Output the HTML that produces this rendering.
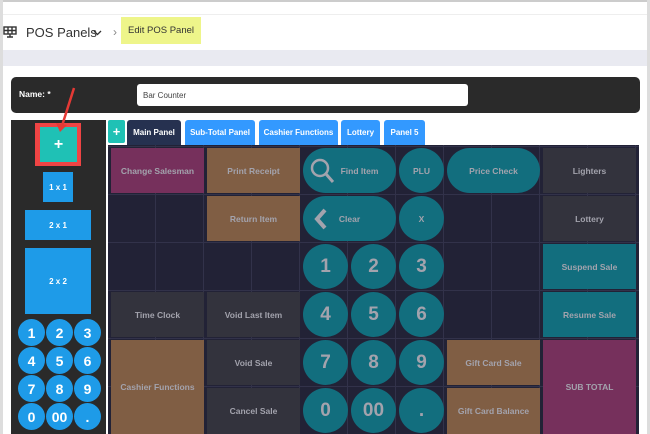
<!DOCTYPE html><html><head><style>
*{margin:0;padding:0;box-sizing:border-box}
body{width:650px;height:434px;overflow:hidden;background:#fff;font-family:"Liberation Sans",sans-serif;position:relative}
.a{position:absolute}
.c{position:absolute;display:flex;align-items:center;justify-content:center;color:#a3a3ad;font-weight:bold;font-size:8.5px;text-align:center}
.p{background:#76305c}.b{background:#805e44}.g{background:#33333d}.t{background:#126e7e}
.k{background:#1e9be8;color:#fff;border-radius:50%;font-size:14px}
.n{border-radius:50%;font-size:19px}
.tab{position:absolute;top:120px;height:25px;background:#3399ff;color:#fff;font-size:8px;font-weight:bold;display:flex;align-items:center;justify-content:center;border-radius:3px 3px 0 0}
</style></head><body>
<div class="a" style="left:0;top:0;width:650px;height:2px;background:#ccc"></div>
<div class="a" style="left:0;top:0;width:3px;height:434px;background:#ddd"></div>
<div class="a" style="left:647px;top:0;width:3px;height:434px;background:#ddd"></div>
<div class="a" style="left:3px;top:14px;width:644px;height:1px;background:#eee"></div>
<svg class="a" style="left:3px;top:26px" width="14" height="12" viewBox="0 0 14 12"><rect x="1" y="1" width="12" height="7" fill="none" stroke="#333" stroke-width="1.4"/><path d="M1 4.5H13M5 1V8M9 1V8M4 11H10M7 8V11" stroke="#333" stroke-width="1.4"/></svg>
<div class="a" style="left:26px;top:25px;font-size:13px;color:#333">POS Panels</div>
<svg class="a" style="left:93px;top:30px" width="9" height="6"><path d="M1 1L4.5 4.5L8 1" fill="none" stroke="#333" stroke-width="1.3"/></svg>
<div class="a" style="left:113px;top:25px;font-size:12px;color:#888">›</div>
<div class="a" style="left:121px;top:17px;width:80px;height:27px;background:#eef58a;font-size:9.5px;color:#333;display:flex;align-items:center;justify-content:center">Edit POS Panel</div>
<div class="a" style="left:3px;top:50px;width:644px;height:16px;background:#e9eaf1"></div>
<div class="a" style="left:11px;top:77px;width:629px;height:36px;background:#2a2a2a;border-radius:5px"></div>
<div class="a" style="left:19px;top:89px;font-size:8.5px;color:#fff;font-weight:bold">Name: *</div>
<div class="a" style="left:137px;top:84px;width:331px;height:22px;background:#fff;border-radius:3px;font-size:8px;color:#444;padding:7px 6px">Bar Counter</div>
<div class="a" style="left:11px;top:120px;width:95px;height:314px;background:#2a2a2a"></div>
<div class="a" style="left:35px;top:123px;width:46px;height:43px;background:#ef4444"></div>
<div class="c" style="left:40px;top:127px;width:37px;height:35px;background:#1fc1b5;color:#fff;font-size:16px">+</div>
<svg class="a" style="left:55px;top:85px" width="30" height="50"><path d="M19 3L6 44" stroke="#e53935" stroke-width="2.5"/><path d="M1 38L5 47L12 40Z" fill="#e53935"/></svg>
<div class="c" style="left:43px;top:172px;width:30px;height:30px;background:#1e9be8;color:#fff;font-size:8px">1 x 1</div>
<div class="c" style="left:25px;top:210px;width:66px;height:30px;background:#1e9be8;color:#fff;font-size:8px">2 x 1</div>
<div class="c" style="left:25px;top:248px;width:66px;height:66px;background:#1e9be8;color:#fff;font-size:8px">2 x 2</div>
<div class="c k" style="left:18px;top:319px;width:27px;height:27px">1</div><div class="c k" style="left:46px;top:319px;width:27px;height:27px">2</div><div class="c k" style="left:74px;top:319px;width:27px;height:27px">3</div>
<div class="c k" style="left:18px;top:347px;width:27px;height:27px">4</div><div class="c k" style="left:46px;top:347px;width:27px;height:27px">5</div><div class="c k" style="left:74px;top:347px;width:27px;height:27px">6</div>
<div class="c k" style="left:18px;top:375px;width:27px;height:27px">7</div><div class="c k" style="left:46px;top:375px;width:27px;height:27px">8</div><div class="c k" style="left:74px;top:375px;width:27px;height:27px">9</div>
<div class="c k" style="left:18px;top:403px;width:27px;height:27px">0</div><div class="c k" style="left:46px;top:403px;width:27px;height:27px">00</div><div class="c k" style="left:74px;top:403px;width:27px;height:27px">.</div>
<div class="c" style="left:108px;top:120px;width:17px;height:23px;background:#1fc1b5;color:#fff;font-size:13px;border-radius:2px">+</div>
<div class="tab" style="left:127px;width:54px;background:#263150">Main Panel</div>
<div class="tab" style="left:185px;width:70px">Sub-Total Panel</div>
<div class="tab" style="left:259px;width:79px">Cashier Functions</div>
<div class="tab" style="left:341px;width:39px">Lottery</div>
<div class="tab" style="left:384px;width:41px">Panel 5</div>
<div class="a" style="left:108px;top:145px;width:531px;height:289px;background:#222236;background-image:repeating-linear-gradient(90deg,transparent 0 47px,#32324a 47px 48px),repeating-linear-gradient(0deg,transparent 0 47px,#32324a 47px 48px)"></div>
<div class="c p" style="left:111px;top:148px;width:93px;height:45px">Change Salesman</div>
<div class="c b" style="left:207px;top:148px;width:93px;height:45px">Print Receipt</div>
<div class="c t" style="left:303px;top:148px;width:93px;height:45px;border-radius:23px;padding-left:20px">Find Item</div>
<svg class="a" style="left:309px;top:157px" width="26" height="28"><circle cx="11" cy="11" r="8" fill="none" stroke="#a3a3ad" stroke-width="2.5"/><path d="M17 17L24 25" stroke="#a3a3ad" stroke-width="3"/></svg>
<div class="c t" style="left:399px;top:148px;width:45px;height:45px;border-radius:50%">PLU</div>
<div class="c t" style="left:447px;top:148px;width:93px;height:45px;border-radius:23px">Price Check</div>
<div class="c g" style="left:543px;top:148px;width:93px;height:45px">Lighters</div>
<div class="c b" style="left:207px;top:196px;width:93px;height:45px">Return Item</div>
<div class="c t" style="left:303px;top:196px;width:93px;height:45px;border-radius:23px">Clear</div>
<svg class="a" style="left:314px;top:207px" width="14" height="24"><path d="M11 3L3 12L11 21" fill="none" stroke="#a3a3ad" stroke-width="4"/></svg>
<div class="c t" style="left:399px;top:196px;width:45px;height:45px;border-radius:50%">X</div>
<div class="c g" style="left:543px;top:196px;width:93px;height:45px">Lottery</div>
<div class="c t" style="left:543px;top:244px;width:93px;height:45px">Suspend Sale</div>
<div class="c t" style="left:543px;top:292px;width:93px;height:45px">Resume Sale</div>
<div class="c g" style="left:111px;top:292px;width:93px;height:45px">Time Clock</div>
<div class="c g" style="left:207px;top:292px;width:93px;height:45px">Void Last Item</div>
<div class="c b" style="left:111px;top:340px;width:93px;height:94px">Cashier Functions</div>
<div class="c g" style="left:207px;top:340px;width:93px;height:45px">Void Sale</div>
<div class="c g" style="left:207px;top:388px;width:93px;height:46px">Cancel Sale</div>
<div class="c b" style="left:447px;top:340px;width:93px;height:45px">Gift Card Sale</div>
<div class="c b" style="left:447px;top:388px;width:93px;height:46px">Gift Card Balance</div>
<div class="c p" style="left:543px;top:340px;width:93px;height:94px">SUB TOTAL</div>
<div class="c t n" style="left:303px;top:244px;width:45px;height:45px">1</div>
<div class="c t n" style="left:351px;top:244px;width:45px;height:45px">2</div>
<div class="c t n" style="left:399px;top:244px;width:45px;height:45px">3</div>
<div class="c t n" style="left:303px;top:292px;width:45px;height:45px">4</div>
<div class="c t n" style="left:351px;top:292px;width:45px;height:45px">5</div>
<div class="c t n" style="left:399px;top:292px;width:45px;height:45px">6</div>
<div class="c t n" style="left:303px;top:340px;width:45px;height:45px">7</div>
<div class="c t n" style="left:351px;top:340px;width:45px;height:45px">8</div>
<div class="c t n" style="left:399px;top:340px;width:45px;height:45px">9</div>
<div class="c t n" style="left:303px;top:388px;width:45px;height:45px">0</div>
<div class="c t n" style="left:351px;top:388px;width:45px;height:45px">00</div>
<div class="c t n" style="left:399px;top:388px;width:45px;height:45px">.</div>
</body></html>
